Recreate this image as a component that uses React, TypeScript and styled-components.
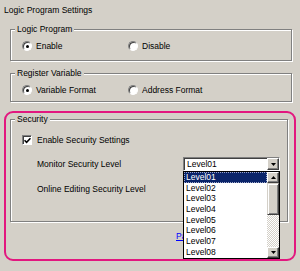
import styled, { createGlobalStyle } from 'styled-components';

const GlobalStyle = createGlobalStyle`
  html, body {
    margin: 0;
    padding: 0;
    background: #d4d0c8;
  }
  body {
    font-family: 'Liberation Sans', Arial, sans-serif;
    font-size: 8.5px;
    color: #000;
  }
`;

const Page = styled.div`
  width: 300px;
  height: 271px;
  box-sizing: border-box;
  padding: 5px 4px 0;
  overflow: hidden;
  background: #d4d0c8;
  display: flex;
  flex-direction: column;
`;

const Title = styled.div`
  height: 10px;
  line-height: 10px;
`;

const GroupBox = styled.div<{ $top: number; $left: number; $width: number; $height: number }>`
  position: relative;
  box-sizing: border-box;
  margin: ${({ $top }) => $top}px 0 0 ${({ $left }) => $left}px;
  width: ${({ $width }) => $width}px;
  height: ${({ $height }) => $height}px;
  border: 1px solid #808080;
  box-shadow: inset 1px 1px 0 #fff, 1px 1px 0 #fff;
  flex-shrink: 0;
`;

const Legend = styled.span`
  position: absolute;
  top: -6px;
  left: 4px;
  padding: 0 2px;
  line-height: 10px;
  background: #d4d0c8;
`;

const RadioRow = styled.div`
  display: flex;
  align-items: center;
  height: 10px;
  margin-top: 11px;
  padding-left: 11px;
`;

const RadioItem = styled.label`
  display: flex;
  align-items: center;
  gap: 4px;
  width: 106px;
  line-height: 10px;
`;

const RadioCircle = styled.span<{ $checked?: boolean }>`
  position: relative;
  width: 10px;
  height: 10px;
  box-sizing: border-box;
  border-radius: 50%;
  border: 1px solid;
  border-color: #808080 #fff #fff #808080;
  background: #fff;
  box-shadow: inset 1px 1px 0 #404040;

  &::after {
    content: '';
    display: ${({ $checked }) => ($checked ? 'block' : 'none')};
    position: absolute;
    left: 2.5px;
    top: 2.5px;
    width: 3px;
    height: 3px;
    border-radius: 50%;
    background: #000;
  }
`;

const Highlight = styled.div`
  box-sizing: border-box;
  width: 292px;
  height: 150px;
  margin-top: 9px;
  padding: 6px 4px;
  border: 2px solid #e2177f;
  border-radius: 9px;
  display: flex;
  flex-direction: column;
  flex-shrink: 0;
`;

const CheckRow = styled.label`
  display: flex;
  align-items: center;
  gap: 5px;
  height: 10px;
  line-height: 10px;
  margin-top: 15px;
  padding-left: 11px;
`;

const CheckBox = styled.span`
  display: flex;
  align-items: center;
  justify-content: center;
  width: 10px;
  height: 10px;
  box-sizing: border-box;
  border: 1px solid;
  border-color: #808080 #fff #fff #808080;
  box-shadow: inset 1px 1px 0 #404040;
  background: #fff;
`;

const FieldRow = styled.div<{ $top: number; $height: number }>`
  display: flex;
  align-items: center;
  height: ${({ $height }) => $height}px;
  margin-top: ${({ $top }) => $top}px;
  padding-left: 26px;
`;

const FieldLabel = styled.span`
  width: 146px;
  line-height: 10px;
`;

const Combo = styled.div`
  position: relative;
  box-sizing: border-box;
  width: 97px;
  height: 14px;
  border: 1px solid;
  border-color: #808080 #fff #fff #808080;
  box-shadow: inset 1px 1px 0 #404040;
  background: #fff;
  display: flex;
  align-items: center;
  padding-left: 3px;
`;

const ComboValue = styled.span`
  flex: 1;
  line-height: 10px;
`;

const ArrowButton = styled.span<{ $height: number }>`
  display: flex;
  align-items: center;
  justify-content: center;
  box-sizing: border-box;
  width: 12px;
  height: ${({ $height }) => $height}px;
  background: #d4d0c8;
  border: 1px solid;
  border-color: #fff #404040 #404040 #fff;
  box-shadow: inset -1px -1px 0 #808080;
  flex-shrink: 0;
`;

const DropList = styled.div`
  position: absolute;
  top: 13px;
  left: -1px;
  z-index: 10;
  box-sizing: border-box;
  width: 97px;
  height: 88px;
  border: 1px solid #000;
  background: #fff;
  display: flex;
`;

const Items = styled.div`
  flex: 1;
  display: flex;
  flex-direction: column;
`;

const Item = styled.div<{ $selected?: boolean }>`
  height: 10.7px;
  line-height: 10.7px;
  padding-left: 2px;
  box-sizing: border-box;
  color: ${({ $selected }) => ($selected ? '#fff' : '#000')};
  background: ${({ $selected }) => ($selected ? '#0a246a' : 'transparent')};
  outline: ${({ $selected }) => ($selected ? '1px dotted #a0a8c8' : 'none')};
  outline-offset: -1px;
`;

const ScrollBar = styled.div`
  width: 12px;
  display: flex;
  flex-direction: column;
`;

const Thumb = styled.div`
  box-sizing: border-box;
  height: 32px;
  background: #d4d0c8;
  border: 1px solid;
  border-color: #d4d0c8 #404040 #404040 #d4d0c8;
  box-shadow: inset 1px 1px 0 #fff, inset -1px -1px 0 #808080;
`;

const Track = styled.div`
  flex: 1;
  background: repeating-conic-gradient(#d4d0c8 0 25%, #fff 0 50%) 0 0 / 2px 2px;
`;

const LinkRow = styled.div`
  margin-top: 9px;
  padding-left: 166px;
  line-height: 10px;
`;

const Link = styled.span`
  color: #0000ff;
  text-decoration: underline;
`;

const Arrow = ({ up }: { up?: boolean }) => (
  <svg width="5" height="3" viewBox="0 0 5 3">
    <path d={up ? 'M2.5 0L5 3H0z' : 'M0 0h5L2.5 3z'} fill="#000" />
  </svg>
);

const levels = ['Level01', 'Level02', 'Level03', 'Level04', 'Level05', 'Level06', 'Level07', 'Level08'];

const App = () => {
  return (
    <>
      <GlobalStyle />
      <Page>
        <Title>Logic Program Settings</Title>

        <GroupBox $top={14} $left={6} $width={282} $height={32}>
          <Legend>Logic Program</Legend>
          <RadioRow>
            <RadioItem>
              <RadioCircle $checked />
              Enable
            </RadioItem>
            <RadioItem>
              <RadioCircle />
              Disable
            </RadioItem>
          </RadioRow>
        </GroupBox>

        <GroupBox $top={12} $left={6} $width={282} $height={29}>
          <Legend>Register Variable</Legend>
          <RadioRow>
            <RadioItem>
              <RadioCircle $checked />
              Variable Format
            </RadioItem>
            <RadioItem>
              <RadioCircle />
              Address Format
            </RadioItem>
          </RadioRow>
        </GroupBox>

        <Highlight>
          <GroupBox $top={0} $left={0} $width={278} $height={103}>
            <Legend>Security</Legend>
            <CheckRow>
              <CheckBox>
                <svg width="7" height="7" viewBox="0 0 7 7">
                  <path d="M0.5 3.2L2.6 5.3L6.5 1.2" stroke="#000" strokeWidth="1.6" fill="none" />
                </svg>
              </CheckBox>
              Enable Security Settings
            </CheckRow>
            <FieldRow $top={12} $height={14}>
              <FieldLabel>Monitor Security Level</FieldLabel>
              <Combo>
                <ComboValue>Level01</ComboValue>
                <ArrowButton $height={12}>
                  <Arrow />
                </ArrowButton>
                <DropList>
                  <Items>
                    {levels.map((level, i) => (
                      <Item key={level} $selected={i === 0}>
                        {level}
                      </Item>
                    ))}
                  </Items>
                  <ScrollBar>
                    <ArrowButton $height={11}>
                      <Arrow up />
                    </ArrowButton>
                    <Thumb />
                    <Track />
                    <ArrowButton $height={11}>
                      <Arrow />
                    </ArrowButton>
                  </ScrollBar>
                </DropList>
              </Combo>
            </FieldRow>
            <FieldRow $top={13} $height={10}>
              <FieldLabel>Online Editing Security Level</FieldLabel>
            </FieldRow>
          </GroupBox>
          <LinkRow>
            <Link>Password Settings</Link>
          </LinkRow>
        </Highlight>
      </Page>
    </>
  );
};

export default App;
